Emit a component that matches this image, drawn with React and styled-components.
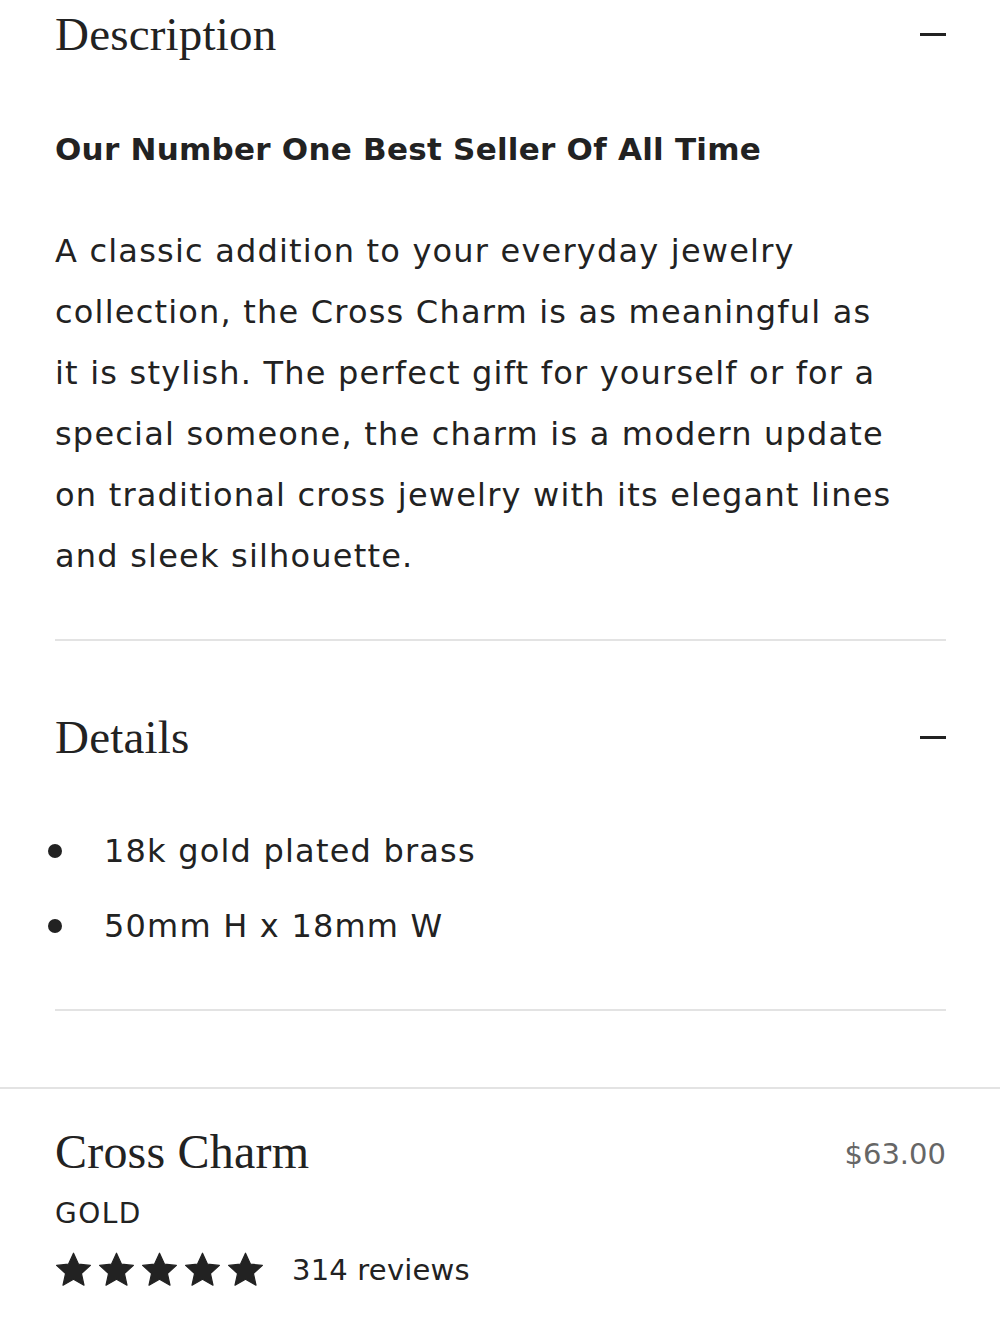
import React from "react";
import styled, { createGlobalStyle } from "styled-components";

const GlobalStyle = createGlobalStyle`
  * { box-sizing: border-box; }
  body {
    margin: 0;
    background: #fff;
    color: #222;
    font-family: "DejaVu Sans", "Open Sans", sans-serif;
  }
`;

const Page = styled.div`
  width: 1000px;
  overflow: hidden;
`;

const Content = styled.div`
  padding: 0 54px 0 55px;
`;

const Section = styled.section`
  border-bottom: 2px solid #e3e3e3;
  padding-bottom: ${(p) => p.pb || 0}px;
  margin-bottom: ${(p) => p.mb || 0}px;
`;

const SectionHead = styled.div`
  display: flex;
  align-items: center;
  justify-content: space-between;
  height: ${(p) => p.h}px;
  margin-top: ${(p) => p.mt || 0}px;
`;

const SerifTitle = styled.h2`
  margin: 0;
  font-family: "Liberation Serif", "Times New Roman", serif;
  font-weight: 400;
  font-size: ${(p) => p.size || 47}px;
  color: #222;
  letter-spacing: 0.2px;
`;

const Minus = styled.span`
  display: block;
  width: 26px;
  height: 3px;
  background: #222;
`;

const SubHead = styled.h3`
  margin: 51px 0 0;
  font-size: 31px;
  font-weight: 700;
  line-height: 60px;
  letter-spacing: 0.25px;
  color: #222;
`;

const Body = styled.p`
  margin: 42px 0 0;
  max-width: 843px;
  font-size: 32px;
  line-height: 61px;
  letter-spacing: 1.2px;
  color: #222;
`;

const List = styled.ul`
  list-style: none;
  margin: 40px 0 0;
  padding: 0;
`;

const Item = styled.li`
  display: flex;
  align-items: center;
  height: 75px;
  font-size: 32px;
  letter-spacing: 1.2px;
  color: #222;
  &::before {
    content: "";
    width: 14px;
    height: 14px;
    border-radius: 50%;
    background: #222;
    margin: 0 42px 0 -7px;
    flex: none;
  }
`;

const Footer = styled.div`
  border-top: 2px solid #e3e3e3;
  padding: 35px 54px 30px 55px;
`;

const Row = styled.div`
  display: flex;
  justify-content: space-between;
  align-items: center;
`;

const Price = styled.span`
  font-size: 29px;
  color: #666;
  margin-top: 4px;
`;

const Variant = styled.div`
  margin-top: 18px;
  font-size: 28px;
  letter-spacing: 1.5px;
  color: #222;
`;

const Rating = styled.div`
  display: flex;
  align-items: center;
  margin-top: 22px;
  gap: 28px;
`;

const Stars = styled.div`
  display: flex;
  gap: 6px;
`;

const Reviews = styled.span`
  font-size: 29px;
  letter-spacing: 0.2px;
  color: #222;
`;

const Star = () => (
  <svg width="37" height="35" viewBox="0 0 24 23">
    <path
      d="M12 0.8l3.3 7.2 7.8 0.8-5.9 5.3 1.7 7.7L12 17.9l-6.9 3.9 1.7-7.7L0.9 8.8l7.8-0.8z"
      fill="#222"
      stroke="#222"
      strokeWidth="0.8"
      strokeLinejoin="round"
    />
  </svg>
);

export default function App() {
  return (
    <Page>
      <GlobalStyle />
      <Content>
        <Section pb={52}>
          <SectionHead h={68} mt={0}>
            <SerifTitle>Description</SerifTitle>
            <Minus />
          </SectionHead>
          <SubHead>Our Number One Best Seller Of All Time</SubHead>
          <Body>
            A classic addition to your everyday jewelry collection, the Cross
            Charm is as meaningful as it is stylish. The perfect gift for
            yourself or for a special someone, the charm is a modern update on
            traditional cross jewelry with its elegant lines and sleek
            silhouette.
          </Body>
        </Section>
        <Section pb={46} mb={76}>
          <SectionHead h={72} mt={60}>
            <SerifTitle>Details</SerifTitle>
            <Minus />
          </SectionHead>
          <List>
            <Item>18k gold plated brass</Item>
            <Item>50mm H x 18mm W</Item>
          </List>
        </Section>
      </Content>
      <Footer>
        <Row>
          <SerifTitle size={48}>Cross Charm</SerifTitle>
          <Price>$63.00</Price>
        </Row>
        <Variant>GOLD</Variant>
        <Rating>
          <Stars>
            {[0, 1, 2, 3, 4].map((i) => (
              <Star key={i} />
            ))}
          </Stars>
          <Reviews>314 reviews</Reviews>
        </Rating>
      </Footer>
    </Page>
  );
}
